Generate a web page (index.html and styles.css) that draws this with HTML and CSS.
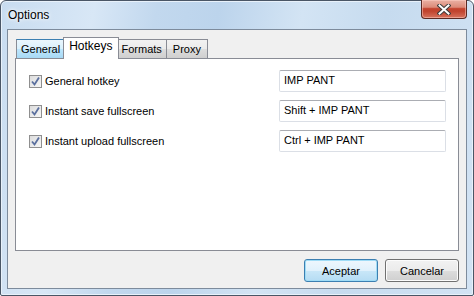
FILE: index.html
```html
<!DOCTYPE html>
<html>
<head>
    <title>Options</title>
    <link rel="stylesheet" href="styles.css">
</head>
<body>
    <div class="window">
        <div class="titlebar">
            <span class="title">Options</span>
            <button class="close" title="Close">
                <svg width="14" height="11" viewBox="0 0 14 11">
                    <path d="M2.5 1.5 L11.5 9.5 M11.5 1.5 L2.5 9.5" stroke="#3b3b3b" stroke-width="4" stroke-linecap="square"/>
                    <path d="M2.5 1.5 L11.5 9.5 M11.5 1.5 L2.5 9.5" stroke="#fff" stroke-width="2" stroke-linecap="square"/>
                </svg>
            </button>
        </div>

        <div class="client">
            <div class="tabs">
                <div class="tab tab-hover">General</div>
                <div class="tab tab-active">Hotkeys</div>
                <div class="tab">Formats</div>
                <div class="tab tab-last">Proxy</div>
            </div>

            <div class="panel">
                <div class="row">
                    <label class="option"><span class="check"><svg width="11" height="11" viewBox="0 0 11 11"><path d="M2 5.5 L4.5 8.5 L9 1.5" fill="none" stroke="#5a6f9e" stroke-width="1.8"/></svg></span>General hotkey</label>
                    <div class="field">IMP PANT</div>
                </div>
                <div class="row">
                    <label class="option"><span class="check"><svg width="11" height="11" viewBox="0 0 11 11"><path d="M2 5.5 L4.5 8.5 L9 1.5" fill="none" stroke="#5a6f9e" stroke-width="1.8"/></svg></span>Instant save fullscreen</label>
                    <div class="field">Shift + IMP PANT</div>
                </div>
                <div class="row">
                    <label class="option"><span class="check"><svg width="11" height="11" viewBox="0 0 11 11"><path d="M2 5.5 L4.5 8.5 L9 1.5" fill="none" stroke="#5a6f9e" stroke-width="1.8"/></svg></span>Instant upload fullscreen</label>
                    <div class="field">Ctrl + IMP PANT</div>
                </div>
            </div>

            <div class="buttons">
                <button class="btn btn-default">Aceptar</button>
                <button class="btn">Cancelar</button>
            </div>
        </div>
    </div>
</body>
</html>
```

FILE: styles.css
```css
body {
    margin: 0;
    padding: 0;
    font-family: "Liberation Sans", Arial, sans-serif;
    font-size: 11px;
    color: #000;
    background-color: #fff;
}

.window {
    width: 474px;
    height: 296px;
    box-sizing: border-box;
    border: 1px solid #4a5666;
    border-radius: 6px 6px 2px 2px;
    background: linear-gradient(100deg, #c8dcf0 0%, #d8e7f6 18%, #c2d8ee 30%, #bcd4ec 42%, #d3e4f4 58%, #c6dbef 74%, #d2e3f4 100%);
    box-shadow: inset 0 0 0 1px #e8f1fa;
    display: flex;
    flex-direction: column;
}

.titlebar {
    height: 28px;
    display: flex;
    justify-content: space-between;
    align-items: flex-start;
    padding: 0 6px 0 7px;
}

.title {
    font-size: 12px;
    line-height: 28px;
    color: #000;
    text-shadow: 0 0 6px #fff, 0 0 3px #fff;
}

.close {
    width: 46px;
    height: 19px;
    margin-top: -1px;
    padding: 0;
    border: 1px solid #5b2a24;
    border-top: 0;
    border-radius: 0 0 4px 4px;
    background: linear-gradient(#eab1a4 0%, #dc8b79 40%, #c4442f 48%, #c0432e 62%, #d7735e 100%);
    box-shadow: inset 0 0 0 1px rgba(255, 210, 200, 0.5);
    display: flex;
    align-items: center;
    justify-content: center;
}

.client {
    flex: 1;
    margin: 0 6px 6px 6px;
    border: 1px solid #7d8b9c;
    background-color: #f0f0f0;
    padding: 7px 7px 6px 7px;
    display: flex;
    flex-direction: column;
}

.tabs {
    display: flex;
    align-items: flex-end;
    height: 21px;
    padding-left: 1px;
}

.tab {
    height: 18px;
    line-height: 19px;
    padding: 0 4px;
    border: 1px solid #898c95;
    border-bottom: 0;
    margin-right: -1px;
    background: linear-gradient(#f2f2f2 0%, #ebebeb 50%, #dddddd 51%, #cfcfcf 100%);
}

.tab-hover {
    padding: 0 5px 0 4px;
    background: linear-gradient(#eaf6fd 0%, #d9f0fc 50%, #bee6fd 51%, #a7d9f5 100%);
    border-color: #3c7fb1 #898c95 #898c95 #898c95;
}

.tab-active {
    position: relative;
    z-index: 1;
    height: 21px;
    line-height: 17px;
    padding: 0 5px;
    margin: 0 -2px -1px -2px;
    background: #fff;
    font-size: 12px;
}

.tab-last {
    padding: 0 6px;
}

.panel {
    height: 193px;
    box-sizing: border-box;
    border: 1px solid #898c95;
    background-color: #fff;
    padding: 11px 12px 0 13px;
    display: flex;
    flex-direction: column;
    gap: 8px;
}

.row {
    display: flex;
    justify-content: space-between;
    align-items: center;
    height: 22px;
}

.option {
    display: flex;
    align-items: center;
    gap: 3px;
}

.check {
    width: 11px;
    height: 11px;
    border: 1px solid #8f8f8f;
    background: linear-gradient(135deg, #dcdcdc 0%, #f6f6f6 100%);
    display: flex;
}

.field {
    width: 167px;
    height: 22px;
    box-sizing: border-box;
    border: 1px solid #dbdfe6;
    border-top-color: #abadb3;
    border-radius: 2px;
    padding: 0 4px;
    line-height: 19px;
}

.buttons {
    display: flex;
    justify-content: flex-end;
    gap: 7px;
    margin-top: 8px;
}

.btn {
    width: 74px;
    height: 23px;
    padding: 0;
    font-family: "Liberation Sans", Arial, sans-serif;
    font-size: 11px;
    color: #000;
    border: 1px solid #707070;
    border-radius: 3px;
    background: linear-gradient(#f2f2f2 0%, #ebebeb 50%, #dddddd 51%, #cfcfcf 100%);
    box-shadow: inset 0 0 0 1px #fcfcfc;
}

.btn-default {
    border-color: #3c7fb1;
    background: linear-gradient(#eef7fd 0%, #e0f1fc 50%, #c9e7f8 51%, #b5dcf3 100%);
    box-shadow: inset 0 0 0 1px #9fdcf6;
}
```
